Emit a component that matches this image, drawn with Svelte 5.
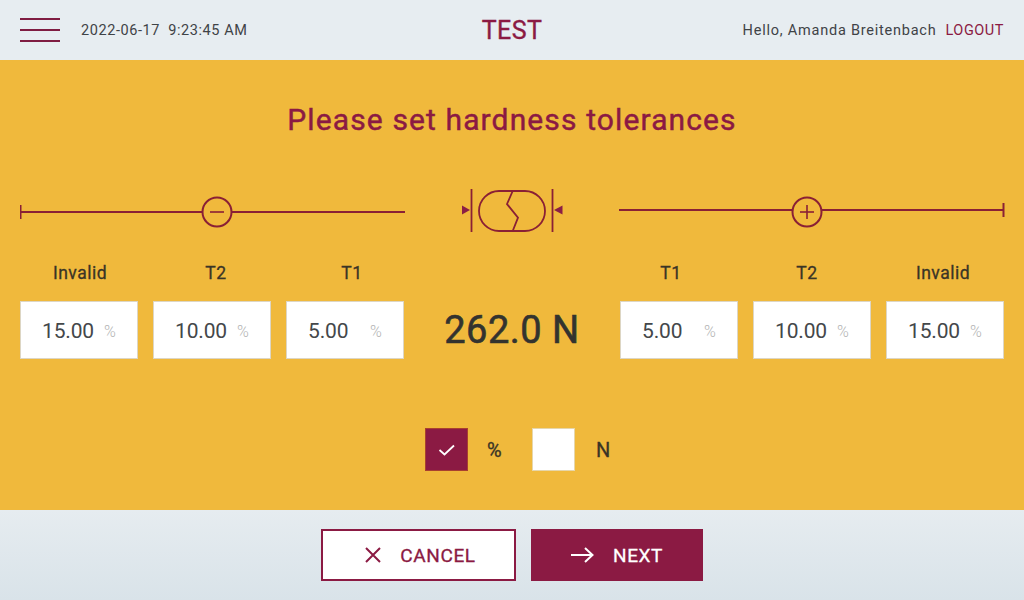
<script lang="ts">
  const leftFields = [
    { label: 'Invalid', value: '15.00' },
    { label: 'T2', value: '10.00' },
    { label: 'T1', value: '5.00' }
  ];
  const rightFields = [
    { label: 'T1', value: '5.00' },
    { label: 'T2', value: '10.00' },
    { label: 'Invalid', value: '15.00' }
  ];
</script>

<div class="screen">
  <header class="topbar">
    <div class="topbar-left">
      <button class="menu-btn" aria-label="Menu">
        <span></span><span></span><span></span>
      </button>
      <span class="clock">2022-06-17&nbsp;&nbsp;9:23:45 AM</span>
    </div>
    <div class="mode">TEST</div>
    <div class="topbar-right">
      <span class="hello">Hello, Amanda Breitenbach</span>
      <span class="logout">LOGOUT</span>
    </div>
  </header>

  <main class="panel">
    <h1 class="title">Please set hardness tolerances</h1>

    <div class="tolerances">
      <div class="group">
        <svg class="slider" width="386" height="34" viewBox="0 0 386 34" fill="none" stroke="#8a2035" stroke-width="2">
          <line x1="0.5" y1="10" x2="0.5" y2="24"/>
          <line x1="0" y1="17" x2="182" y2="17"/>
          <circle cx="197" cy="17" r="14.5"/>
          <line x1="190" y1="17" x2="204" y2="17" stroke-width="1.6"/>
          <line x1="212" y1="17" x2="385" y2="17"/>
        </svg>
        <div class="labels left">
          {#each leftFields as f}
            <div class="field-label">{f.label}</div>
          {/each}
        </div>
        <div class="fields">
          {#each leftFields as f}
            <div class="input"><span class="num">{f.value}</span><span class="unit">%</span></div>
          {/each}
        </div>
      </div>

      <div class="center">
        <svg class="sample" width="104" height="50" viewBox="0 0 104 50" fill="none" stroke="#8a2035" stroke-width="1.8">
          <line x1="11.5" y1="0" x2="11.5" y2="43"/>
          <line x1="92.5" y1="0" x2="92.5" y2="43"/>
          <path d="M2 16.5 L10 21 L2 25.5 Z" fill="#8a1f45" stroke="none"/>
          <path d="M102.5 16.5 L94 21 L102.5 25.5 Z" fill="#8a1f45" stroke="none"/>
          <rect x="19" y="2" width="66" height="40" rx="20"/>
          <path d="M52.7 2 L47 15 L58 28.7 L52.7 42"/>
        </svg>
        <div class="reading">262.0 N</div>
      </div>

      <div class="group">
        <svg class="slider right" width="386" height="34" viewBox="0 0 386 34" fill="none" stroke="#8a2035" stroke-width="2">
          <line x1="0" y1="15" x2="173" y2="15"/>
          <circle cx="188" cy="17" r="14.5"/>
          <line x1="181" y1="17" x2="195" y2="17" stroke-width="1.6"/>
          <line x1="188" y1="10" x2="188" y2="24" stroke-width="1.6"/>
          <line x1="203" y1="15" x2="385" y2="15"/>
          <line x1="384.5" y1="8" x2="384.5" y2="22"/>
        </svg>
        <div class="labels right">
          {#each rightFields as f}
            <div class="field-label">{f.label}</div>
          {/each}
        </div>
        <div class="fields">
          {#each rightFields as f}
            <div class="input"><span class="num">{f.value}</span><span class="unit">%</span></div>
          {/each}
        </div>
      </div>
    </div>

    <div class="units">
      <div class="check checked">
        <svg width="18" height="14" viewBox="0 0 18 14" fill="none" stroke="#fff" stroke-width="1.8">
          <path d="M1.5 7 L6.5 11.5 L16 2.5"/>
        </svg>
      </div>
      <span class="check-label pct">%</span>
      <div class="check"></div>
      <span class="check-label unit-n">N</span>
    </div>
  </main>

  <footer class="actions">
    <button class="btn cancel">
      <svg width="16" height="16" viewBox="0 0 16 16" fill="none" stroke="#8b1a43" stroke-width="2">
        <path d="M1 1 L15 15 M15 1 L1 15"/>
      </svg>
      CANCEL
    </button>
    <button class="btn next">
      <svg width="23" height="16" viewBox="0 0 23 16" fill="none" stroke="#fff" stroke-width="2">
        <path d="M0 8 H21 M14 1 L21.5 8 L14 15"/>
      </svg>
      NEXT
    </button>
  </footer>
</div>

<style>
  :global(body) {
    margin: 0;
    font-family: Roboto, "Liberation Sans", sans-serif;
  }

  .screen {
    width: 1024px;
    height: 600px;
    display: flex;
    flex-direction: column;
    overflow: hidden;
  }

  .topbar {
    height: 60px;
    flex: none;
    display: grid;
    grid-template-columns: 1fr auto 1fr;
    align-items: center;
    padding: 0 20px;
    background: #e7edf1;
    color: #3f4347;
  }

  .topbar-left {
    display: flex;
    align-items: center;
    gap: 21px;
  }

  .menu-btn {
    width: 40px;
    height: 24px;
    padding: 0;
    background: none;
    border: none;
    display: flex;
    flex-direction: column;
    justify-content: space-between;
  }

  .menu-btn span {
    display: block;
    height: 2px;
    background: #7f1d42;
  }

  .clock {
    font-size: 14.5px;
    letter-spacing: 0.57px;
  }

  .mode {
    font-size: 25px;
    font-weight: 400;
    -webkit-text-stroke: 0.35px currentColor;
    color: #8b1a43;
    letter-spacing: 0.4px;
  }

  .topbar-right {
    display: flex;
    justify-content: flex-end;
    gap: 9px;
    font-size: 14.5px;
    letter-spacing: 0.77px;
  }

  .logout {
    color: #8b1a43;
    letter-spacing: 0.55px;
  }

  .panel {
    height: 450px;
    flex: none;
    box-sizing: border-box;
    padding: 42px 20px 0;
    background: #f0b93c;
    display: flex;
    flex-direction: column;
  }

  .title {
    margin: 0;
    height: 36px;
    line-height: 36px;
    text-align: center;
    font-size: 30px;
    font-weight: 400;
    -webkit-text-stroke: 0.45px currentColor;
    letter-spacing: 1.12px;
    color: #8b1a43;
  }

  .tolerances {
    margin-top: 57px;
    display: grid;
    grid-template-columns: 384px 1fr 384px;
  }

  .slider {
    display: block;
    height: 34px;
  }

  .slider.right {
    margin-left: -1px;
  }

  .labels {
    margin-top: 33px;
    margin-bottom: 17px;
    display: grid;
    grid-template-columns: repeat(3, 136px);
  }

  .labels.left {
    margin-left: -8px;
  }

  .labels.right {
    margin-left: -17px;
  }

  .field-label {
    height: 22px;
    line-height: 22px;
    text-align: center;
    font-size: 17.5px;
    -webkit-text-stroke: 0.3px currentColor;
    letter-spacing: 0.5px;
    color: #3a3426;
  }

  .fields {
    display: grid;
    grid-template-columns: repeat(3, 118px);
    gap: 15px;
  }

  .input {
    height: 58px;
    box-sizing: border-box;
    padding: 2px 0 0 21px;
    display: flex;
    align-items: center;
    background: #fff;
    border: 1px solid #ddd6c4;
  }

  .num {
    width: 62px;
    font-size: 21px;
    letter-spacing: -0.15px;
    color: #44474a;
  }

  .unit {
    font-size: 16px;
    font-weight: 300;
    color: #b4b4b4;
  }

  .center {
    display: flex;
    flex-direction: column;
    align-items: center;
  }

  .sample {
    display: block;
    margin-top: -6px;
  }

  .reading {
    margin-top: 68px;
    height: 46px;
    line-height: 46px;
    font-size: 38px;
    -webkit-text-stroke: 0.6px currentColor;
    letter-spacing: 0.5px;
    color: #33332f;
  }

  .units {
    margin-top: 69px;
    padding-left: 11px;
    display: flex;
    align-items: center;
    justify-content: center;
  }

  .check {
    width: 43px;
    height: 43px;
    box-sizing: border-box;
    display: flex;
    align-items: center;
    justify-content: center;
    background: #fff;
    border: 1px solid #e6d6ab;
  }

  .check.checked {
    background: #8b1a43;
    border-color: #a8402f;
  }

  .check-label {
    font-size: 20px;
    -webkit-text-stroke: 0.3px currentColor;
    color: #3a3426;
  }

  .check-label.pct {
    width: 45px;
    margin-left: 19px;
  }

  .check-label.unit-n {
    width: 14px;
    margin-left: 21px;
  }

  .actions {
    flex: 1;
    display: flex;
    justify-content: center;
    align-items: center;
    gap: 15px;
    background: linear-gradient(#e6ecf0, #d9e3e9);
  }

  .btn {
    height: 52px;
    box-sizing: border-box;
    display: flex;
    align-items: center;
    justify-content: center;
    font-family: inherit;
    font-size: 19px;
    -webkit-text-stroke: 0.3px currentColor;
    letter-spacing: 0.6px;
  }

  .cancel {
    width: 195px;
    padding-left: 10px;
    gap: 19px;
    background: #fff;
    color: #8b1a43;
    border: 2px solid #8b1a43;
  }

  .next {
    width: 172px;
    gap: 19px;
    background: #8b1a43;
    color: #fff;
    border: none;
  }
</style>
